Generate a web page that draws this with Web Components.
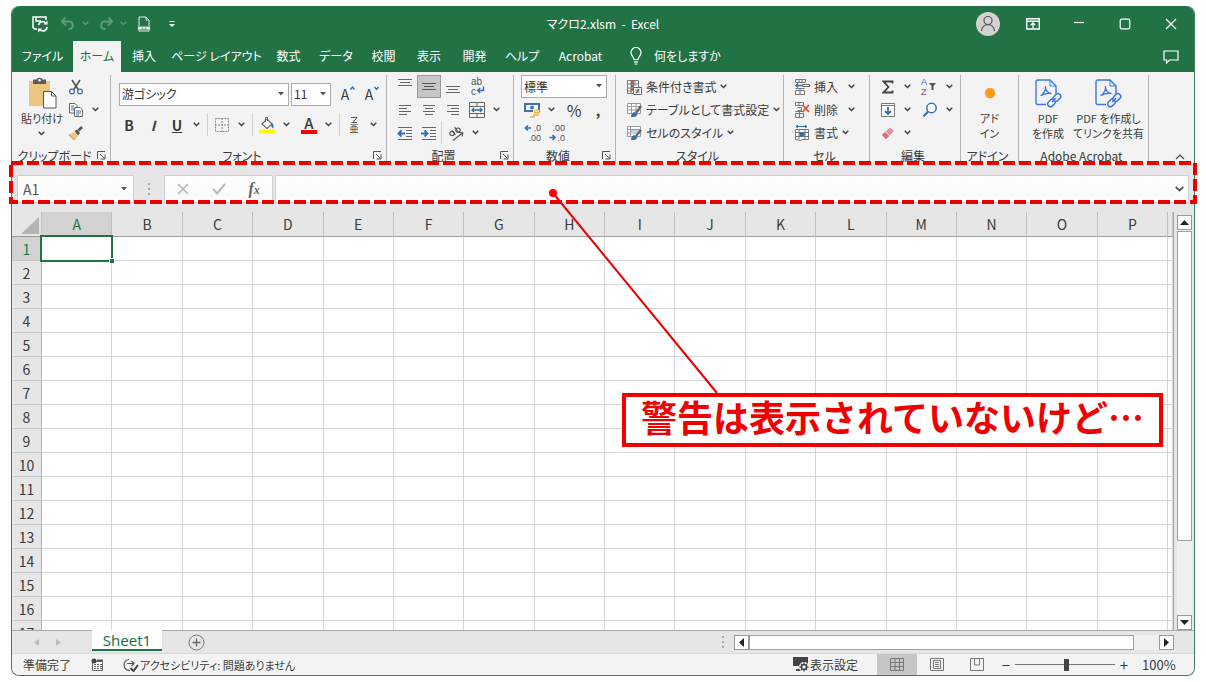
<!DOCTYPE html>
<html lang="ja">
<head>
<meta charset="utf-8">
<title>マクロ2.xlsm - Excel</title>
<style>
  :root {
    --green: #217346;
    --bar: #e6e6e6;
    --panel: #f3f3f3;
    --line: #d6d6d6;
    --ink: #3b3b3b;
    --red: #f00000;
  }
  * { box-sizing: border-box; }
  html, body { margin: 0; }
  body {
    height: 100vh;
    padding: 6px 11px;
    display: flex;
    background: #fff;
    color: var(--ink);
    font: 12px/16px "Noto Sans CJK JP", "Noto Sans", sans-serif;
    font-feature-settings: "palt";
  }
</style>
</head>
<body>
<excel-window></excel-window>

<script>
const ICONS = {
  save: [18, 18, '<path d="M6 14H3.500L2 12.500V2h13v3M5 2v4h5" fill="none" stroke="#fff" stroke-width="1.500"/><path d="M7.500 10a4 4 0 0 1 7-2M16 12a4 4 0 0 1-7 2.500" fill="none" stroke="#fff" stroke-width="1.700"/><path d="M16.500 5.500v4h-4zM7 17.500v-4h4z" fill="#fff"/>'],
  undo: [16, 16, '<path d="M5.500 1.500L2 5.500l4 4M2 5.500h7.500a4 3.800 0 0 1 0 7.500H8.500" fill="none" stroke="#5c9a78" stroke-width="1.900"/>'],
  redo: [16, 16, '<path d="M10.500 1.500L14 5.500l-4 4M14 5.500H6.500a4 3.800 0 0 0 0 7.500H7.500" fill="none" stroke="#5c9a78" stroke-width="1.900"/>'],
  doc: [16, 16, '<path d="M3 10V1h7l3 3v6M10 1v3h3M3 13v2h10v-2" fill="none" stroke="#dfeee5"/><path d="M2 10.500h12v3H2z" fill="#dfeee5"/><path d="M6 12h1M9 12h1" stroke="#217346"/>'],
  custom: [8, 8, '<path d="M1.500 1.500h5" stroke="#fff" fill="none"/><path d="M1 4h6L4 7z" fill="#fff"/>'],
  user: [24, 24, '<circle cx="12" cy="12" r="12" fill="#d2d2d2"/><circle cx="12" cy="8.500" r="4" fill="none" stroke="#555" stroke-width="1.200"/><path d="M5.500 19c.5-8.500 12.500-8.500 13 0" fill="none" stroke="#555" stroke-width="1.200"/>'],
  ribbonopt: [14, 12, '<path d="M.7.700h12.600v10.300H.7zM.7 3.300h12.600" fill="none" stroke="#fff" stroke-width="1.400"/><path d="M7 10V5.500M4.700 7.300L7 5l2.300 2.300" fill="none" stroke="#fff" stroke-width="1.300"/>'],
  min: [12, 12, '<path d="M1 4.500h10" stroke="#fff" stroke-width="1.200"/>'],
  max: [12, 12, '<rect x="1.200" y="1.200" width="9.600" height="9.600" rx="1.500" fill="none" stroke="#fff" stroke-width="1.200"/>'],
  close: [12, 12, '<path d="M1 1l10 10M11 1L1 11" stroke="#fff" stroke-width="1.300"/>'],
  comment: [16, 14, '<path d="M1 1h14v9H6.500l-3 3v-3H1z" fill="none" stroke="#fff" stroke-width="1.200"/>'],
  bulb: [12, 18, '<path d="M4 12.500c0-2.500-3-3.500-3-7a5 5 0 0 1 10 0c0 3.500-3 4.500-3 7zM4 14.800h4M4.500 17h3" fill="none" stroke="#fff" stroke-width="1.200"/>'],
  paste: [30, 32, '<path d="M2 4h21v25H2z" fill="#ecc57f"/><path d="M6 2.500h3.500C10 .3 15 .3 15.500 2.500H19V7H6z" fill="#5b5b5b"/><circle cx="12.500" cy="3.200" r="1.200" fill="#f3f3f3"/><path d="M16.500 14.500h8l4.500 4.500v12H16.500z" fill="#fff" stroke="#555"/><path d="M24.500 14.500V19H29" fill="none" stroke="#555"/>'],
  cut: [16, 16, '<path d="M4 1l6.500 10M12 1L5.500 11" stroke="#555" stroke-width="1.700" fill="none"/><circle cx="4" cy="12.500" r="2.400" fill="none" stroke="#3f73b5" stroke-width="1.300"/><circle cx="12" cy="12.500" r="2.400" fill="none" stroke="#3f73b5" stroke-width="1.300"/>'],
  copy: [16, 16, '<path d="M1.500 1.500H7l2 2V11H1.500z" fill="#fff" stroke="#666"/><path d="M6.500 5.500H12l2.500 2.500v6.500h-8z" fill="#fff" stroke="#666"/><path d="M3 4h3M3 6h3M3 8h3M8 9h5M8 11h5M8 13h3" stroke="#3f73b5"/>'],
  brush: [16, 16, '<path d="M2 9l4-2 4 4-3 4z" fill="#ecc57f"/><path d="M6.500 6L9 4.500 12 8l-2 2.500z" fill="#555"/><path d="M10.500 5.500L14 2" stroke="#555" stroke-width="2.600"/><path d="M1 9.500L6.500 15" stroke="#d9a95a" stroke-width="1.500"/>'],
  borders: [16, 16, '<path d="M1.500 1.500h13v13h-13zM8 1v14M1 8h14" fill="none" stroke="#888" stroke-dasharray="2 1"/>'],
  fill: [18, 18, '<path d="M4 8l5-5 5 5-5 4.500z" fill="#fff" stroke="#666" stroke-width="1.100"/><path d="M7.500 6V1.500h2V5" fill="none" stroke="#666"/><path d="M13.500 6.500q3 2 1.500 6-2-1-2-5z" fill="#2f6fb3"/><path d="M1 13.500h16v4H1z" fill="#ff0"/>'],
  growmark: [24, 23, '<path d="M17.500 6.500L19.500 4l2 2.500" fill="none" stroke="#2f6fb3" stroke-width="1.400"/>'],
  shrinkmark: [24, 23, '<path d="M17.500 4l2 2.500 2-2.500" fill="none" stroke="#2f6fb3" stroke-width="1.400"/>'],
  ruby: [24, 23, '<path d="M9 4.500h6L11 9.500M13 7l-1.500 1M9.500 9.500H15" fill="none" stroke="#555"/>'],
  wrap: [24, 23, '<path d="M18.500 11.500v4H13M15.200 13l-2.500 2.500 2.500 2.500" fill="none" stroke="#2f6fb3" stroke-width="1.400"/>'],
  atop: [16, 16, '<path d="M1 .5h14M3 3.500h10M1 6.500h14" stroke="#666"/>'],
  amid: [16, 16, '<path d="M1 4.500h14M3 7.500h10M1 10.500h14" stroke="#555"/>'],
  abot: [16, 16, '<path d="M1 7.500h14M3 10.500h10M1 13.500h14" stroke="#666"/>'],
  left: [12, 12, '<path d="M0 1.500h12M0 4.500h8M0 7.500h12M0 10.500h8" stroke="#666"/>'],
  center: [12, 12, '<path d="M0 1.500h12M2 4.500h8M0 7.500h12M2 10.500h8" stroke="#666"/>'],
  right: [12, 12, '<path d="M0 1.500h12M4 4.500h8M0 7.500h12M4 10.500h8" stroke="#666"/>'],
  merge: [16, 16, '<path d="M.5.500h15v15H.5zM.5 4.500h15M.5 11.500h15M8 0v4M8 12v4" fill="none" stroke="#666"/><path d="M3 8h10M5 6L3 8l2 2M11 6l2 2-2 2" fill="none" stroke="#2f6fb3" stroke-width="1.300"/>'],
  outdent: [16, 14, '<path d="M1 1.500h14M9 4.500h6M9 7.500h6M9 10.500h6M1 13.500h14" stroke="#666"/><path d="M2 7.500h6M4.500 4.500l-3 3 3 3" stroke="#2f6fb3" stroke-width="1.800" fill="none"/>'],
  indent: [16, 14, '<path d="M1 1.500h14M9 4.500h6M9 7.500h6M9 10.500h6M1 13.500h14" stroke="#666"/><path d="M0 7.500h6M3.500 4.500l3 3-3 3" stroke="#2f6fb3" stroke-width="1.800" fill="none"/>'],
  slant: [16, 16, '<g fill="none" stroke="#555" stroke-width="1.200"><circle cx="4" cy="8.500" r="2.200"/><path d="M4 5.300l3.500 4.500M6.500 2l4 5.500"/><circle cx="10" cy="5.200" r="2.200"/><path d="M5 15.500L14.500 8M11 7.500l3.800.2-.6 3.800"/></g>'],
  money: [17, 16, '<path d="M1 2h14v7H1z" fill="#fff" stroke="#3f73b5" stroke-width="2"/><circle cx="8" cy="5.500" r="2" fill="#3f73b5"/><path d="M9 8h6v7H9z" fill="#f3f3f3"/><path d="M10 8.500h6M10 10.800h6M9 13h6M6 15h5" stroke="#e8b45a" stroke-width="1.500"/>'],
  decup: [24, 23, '<path d="M5.500 7H11M8 4.500L5.500 7 8 9.500" fill="none" stroke="#2f6fb3" stroke-width="1.700"/>'],
  decdn: [24, 23, '<path d="M5.500 16.500H11M8.500 14l2.500 2.500L8.500 19" fill="none" stroke="#2f6fb3" stroke-width="1.700"/>'],
  cond: [16, 16, '<path d="M1.500 1.500h11v13h-11zM5 1v14M9 1v6M1 5h12M1 9h6M1 12h5" fill="#fff" stroke="#777"/><path d="M5 2h3v3H5zM5 9h2v3H5z" fill="#d9532c"/><path d="M5 5.500h3v3H5z" fill="#3f73b5"/><path d="M7.500 8.500h8v7h-8z" fill="#fff" stroke="#666"/><path d="M9.500 11h4M9.500 13h4M13 10l-3 4.500" stroke="#555"/>'],
  table: [16, 16, '<path d="M1.500 1.500h13v10h-13zM1 4.500h14M1 8h14M5.500 1v11M10 1v10" fill="#fff" stroke="#999"/><path d="M5 15q0-4 3.500-5l3 2.500Q10 15.500 5 15z" fill="#2f6fb3"/><path d="M10 11L15 4" stroke="#666" stroke-width="2.400"/>'],
  cellstyle: [16, 16, '<path d="M1.500 1.500h13v10h-13zM1 4.500h14M4.500 1v10M1 8h14" fill="#fff" stroke="#999"/><path d="M5 5h8v4H5z" fill="#bcd3ec"/><path d="M5 15q0-4 3.500-5l3 2.500Q10 15.500 5 15z" fill="#2f6fb3"/><path d="M10 11L15 5" stroke="#666" stroke-width="2.400"/>'],
  insert: [16, 16, '<path d="M1.500.500h10v3h-10zM5 .5v3M8 .5v3M1.500 11.500h9v4h-9zM6 9.500v6M1.500 9.500h9" fill="none" stroke="#777"/><path d="M8.500 5.500h7v2h-7z" fill="#fff" stroke="#666"/><path d="M2 6.500h6M4 4.500L2 6.500l2 2" stroke="#2f6fb3" stroke-width="1.400" fill="none"/>'],
  del: [16, 16, '<path d="M1.500.500h8v3h-8zM5 .5v3M3.500 5.500h4v3h-4M1.500 11.500h8v4h-8zM5.500 9.500v6M1.500 9.500h8" fill="none" stroke="#777"/><path d="M8.500 3L15 10M15 3L8.500 10" stroke="#df4d26" stroke-width="1.800"/>'],
  format: [16, 16, '<path d="M2 1.500h11M4 0L2 1.500 4 3M11 0l2 1.500L11 3" fill="none" stroke="#2f6fb3"/><path d="M1.500 4.500h13v10h-6l-2 1-5-1zM5 4.500v10M11 4.500v10M1.500 7.500h13M1.500 11.500h13" fill="#fff" stroke="#777"/><path d="M5.500 7.500h5v4h-5z" fill="#2f6fb3"/>'],
  sum: [12, 14, '<path d="M10.500 3.500V1.500H1.500L6.500 7l-5 5.500h9v-2" fill="none" stroke="#444" stroke-width="1.800"/>'],
  sort: [24, 23, '<path d="M11 8h7l-2.500 3v4h-2v-4z" fill="#555"/>'],
  down: [14, 14, '<path d="M.5.500h13v13H.5zM.5 2.500h13" fill="#fff" stroke="#777"/><path d="M7 4v7M4 8l3 3 3-3" fill="none" stroke="#2f6fb3" stroke-width="1.800"/>'],
  find: [16, 16, '<circle cx="9.500" cy="6" r="4.700" fill="#fff" stroke="#2f6fb3" stroke-width="1.500"/><path d="M6 9.500L1.500 14.500" stroke="#2f6fb3" stroke-width="2"/>'],
  eraser: [14, 14, '<path d="M1 9l8-7.500 4 3.500-8 8z" fill="#e88b9c"/><path d="M1 9l3.500-3 4 3.800L5 13z" fill="#e0697f"/><path d="M4.500 5.700l4 4" stroke="#fff"/>'],
  dot: [12, 12, '<circle cx="6" cy="6" r="5.200" fill="#ff9a1a"/>'],
  pdf: [28, 30, '<path d="M12 26.500H4q-2 0-2-2V4q0-2 2-2h12l6 6v8" fill="none" stroke="#3b78e7" stroke-width="1.400"/><path d="M16 2v6h6" fill="none" stroke="#3b78e7"/><path d="M6.500 17.500c3-1 5.500-5.500 5-9.500M11.500 9c0 4 3 6.500 6 6.500-4-.5-7 0-10.500 2" fill="none" stroke="#3b78e7" stroke-width="1.300"/><g fill="#f3f3f3" stroke="#3b78e7" stroke-width="1.500" transform="rotate(-45 20 22)"><rect x="12" y="19.500" width="8.500" height="5.500" rx="2.700"/><rect x="19.500" y="19.500" width="8.500" height="5.500" rx="2.700"/></g><path d="M18 24l4-4" stroke="#3b78e7" stroke-width="1.400"/>'],
  launcher: [9, 9, '<path d="M.5 8V.5H8M3 3l4.500 4.500M8 3.500V8H3.500" fill="none" stroke="#555"/>'],
  up: [10, 6, '<path d="M1 5l4-4 4 4" fill="none" stroke="#444" stroke-width="1.200"/>'],
  caret: [7, 5, '<path d="M.7.700l2.800 2.800L6.300.7" fill="none" stroke="currentColor" stroke-width="1.300"/>'],
  tri: [6, 4, '<path d="M0 0h6L3 3.500z" fill="#555"/>'],
  dots: [4, 14, '<path d="M1 1h2v2H1zM1 6h2v2H1zM1 11h2v2H1z" fill="#a8a8a8"/>'],
  cancel: [12, 12, '<path d="M1 1l10 10M11 1L1 11" stroke="#b8b8b8" stroke-width="1.700"/>'],
  check: [14, 12, '<path d="M1 6l4 4.500L13 1" fill="none" stroke="#b8b8b8" stroke-width="2"/>'],
  expand: [9, 6, '<path d="M.7 1l3.800 3.500L8.300 1" fill="none" stroke="#555" stroke-width="1.700"/>'],
  corner: [18, 17, '<path d="M18 0v17H0z" fill="#b4b4b4"/>'],
  sup: [9, 5, '<path d="M0 5l4.500-5L9 5z" fill="#222"/>'],
  sdn: [9, 5, '<path d="M0 0l4.500 5L9 0z" fill="#222"/>'],
  sl: [5, 9, '<path d="M5 0v9L0 4.500z" fill="#222"/>'],
  sr: [5, 9, '<path d="M0 0v9l5-4.500z" fill="#222"/>'],
  nl: [5, 7, '<path d="M5 0v7L0 3.500z" fill="#bdbdbd"/>'],
  nr: [5, 7, '<path d="M0 0v7l5-3.500z" fill="#bdbdbd"/>'],
  plus: [17, 17, '<circle cx="8.500" cy="8.500" r="7.500" fill="none" stroke="#777"/><path d="M4.500 8.500h8M8.500 4.500v8" stroke="#666" stroke-width="1.300"/>'],
  macro: [13, 13, '<path d="M1.500 3.500h10v9h-10z" fill="#fff" stroke="#666"/><path d="M6 1.500h6v2H6z" fill="#555"/><circle cx="3" cy="3" r="2.500" fill="#444"/><path d="M3 6.500h8M3 8.500h8M3 10.500h8" stroke="#666" stroke-dasharray="2 1"/>'],
  access: [16, 14, '<path d="M6 1.500a5.500 5.500 0 0 0 1 11M4 5.500h7M8.500 3l2.500 2.500L8.500 8" fill="none" stroke="#555" stroke-width="1.200"/><path d="M7.500 10l3 3 4.500-6" fill="none" stroke="#444" stroke-width="2"/>'],
  display: [16, 15, '<path d="M0 0h15v9H0zM3 12h5v2H3z" fill="#444"/><circle cx="11" cy="10" r="5" fill="#f3f3f3"/><path d="M11 5.500v9M6.500 10h9M8 7l6 6M14 7l-6 6" stroke="#444" stroke-width="1.300"/><circle cx="11" cy="10" r="2.500" fill="#f3f3f3" stroke="#444" stroke-width="1.500"/>'],
  normal: [14, 13, '<path d="M.5.500h13v12H.5zM.5 4.500h13M.5 8.500h13M5 .5v12M9.500.500v12" fill="none" stroke="#777"/>'],
  pagelay: [14, 13, '<path d="M.5.500h13v12H.5zM3.500 2.500h7v8h-7zM5 4.500h4M5 6.500h4M5 8.500h4" fill="none" stroke="#777"/>'],
  pagebrk: [14, 13, '<path d="M.5.500h13v12H.5zM4.500.500v6.500h5V.5" fill="none" stroke="#777"/>']
};
const icon = n => { const [w, h, s] = ICONS[n]; return `<svg width="${w}" height="${h}" viewBox="0 0 ${w} ${h}" aria-hidden="true">${s}</svg>`; };
const BASE = `<style>*{box-sizing:border-box}svg{display:block;flex:none}
button{font:inherit;color:inherit;background:none;border:0;padding:0;margin:0;display:flex;align-items:center;justify-content:center}</style>`;

function define(name, render) {
  customElements.define(name, class extends HTMLElement {
    connectedCallback() {
      if (this.shadowRoot) return;
      this.attachShadow({ mode: 'open' }).innerHTML = BASE + render(this);
    }
  });
}

/* Icon button; the slot carries glyphs laid over the icon, or a caption beside it. */
define('tool-button', el => {
  const i = el.getAttribute('icon'), cap = el.hasAttribute('caption');
  return `<style>
    :host{display:flex;height:23px;flex:none}
    :host([sep]){border-left:1px solid #d0d0d0;padding-left:2px}
    :host([on]) button{background:#c6c6c6;outline:1px solid #9a9a9a;outline-offset:-1px}
    .i{width:24px;height:100%;display:grid;place-items:center}
    .i>*,::slotted(*){grid-area:1/1}
    .t{white-space:nowrap}
    .c{width:var(--caret,18px);padding-right:var(--caretpad,4px);display:flex;justify-content:center}
    button{height:100%}
  </style><button type="button" aria-label="${el.getAttribute('name') || el.textContent.trim()}">
    <span class="i">${i ? icon(i) : ''}${cap ? '' : '<slot></slot>'}</span>${cap ? '<span class="t"><slot></slot></span>' : ''}${el.hasAttribute('caret') ? `<span class="c">${icon('caret')}</span>` : ''}
  </button>`;
});

/* Tall ribbon button: picture above a caption. */
define('big-button', el => `<style>
    :host{display:flex;justify-content:center;flex:none}
    button{flex-direction:column;justify-content:flex-start;line-height:15px;font-size:11px;white-space:nowrap}
    .p{height:36px;display:flex;align-items:center}
    .c{height:14px;display:flex;align-items:center}
  </style><button type="button"><span class="p">${icon(el.getAttribute('icon'))}</span><slot></slot>
  ${el.hasAttribute('caret') ? `<span class="c">${icon('caret')}</span>` : ''}</button>`);

define('drop-list', el => `<style>
    :host{display:flex;position:relative;height:23px;flex:none}
    select{appearance:none;flex:1;min-width:0;border:1px solid #ababab;border-radius:0;background:#fff;color:#333;font:12px/20px "Noto Sans CJK JP",sans-serif;font-feature-settings:inherit;padding:0 2px;margin:0}
    svg{position:absolute;right:5px;top:9px;pointer-events:none}
  </style><select aria-label="${el.getAttribute('name')}"><option>${el.getAttribute('value')}</option></select>${icon('tri')}`);

define('ribbon-group', el => `<style>
    :host{display:flex;flex-direction:column;flex:none;border-right:1px solid #b4b4b4}
    .body{height:73px;display:flex;flex-direction:column}
    footer{display:flex;align-items:center;height:15px;padding-right:4px}
    footer span{flex:1;text-align:center;white-space:nowrap;line-height:15px}
  </style><div class="body"><slot></slot></div>
  <footer><span>${el.getAttribute('label')}</span>${el.hasAttribute('launcher') ? `<button type="button" aria-label="${el.getAttribute('label')}の設定">${icon('launcher')}</button>` : ''}</footer>`);

define('title-bar', () => `<style>
    :host{display:grid;grid-template-columns:1fr auto 1fr;align-items:center;height:35px;background:var(--green);color:#fff;flex:none;border-radius:8px 8px 0 0}
    .q{display:flex;gap:4px;padding-left:16px;--caret:10px;--caretpad:0px}
    .dim{color:#5c9a78}
    .w{display:flex;justify-content:flex-end;align-items:center}
    .w button{width:46px;height:32px}.w .u{width:24px;margin-right:10px}
  </style>
  <div class="q"><tool-button icon="save" name="上書き保存"></tool-button><tool-button class="dim" icon="undo" name="元に戻す" caret></tool-button><tool-button class="dim" icon="redo" name="やり直し" caret></tool-button><tool-button icon="doc" name="印刷プレビュー"></tool-button><tool-button icon="custom" name="カスタマイズ"></tool-button></div>
  <span>マクロ2.xlsm&nbsp; - &nbsp;Excel</span>
  <div class="w"><button class="u" aria-label="アカウント">${icon('user')}</button><button aria-label="リボンの表示オプション">${icon('ribbonopt')}</button><button aria-label="最小化">${icon('min')}</button><button aria-label="最大化">${icon('max')}</button><button aria-label="閉じる">${icon('close')}</button></div>`);

define('ribbon-tabs', () => `<style>
    :host{display:flex;height:31px;background:var(--green);color:#fff;flex:none}
    nav{display:grid;grid-template-columns:61px 48px 46px 99px 45px 50px 45px 46px 45px 50px 67px}
    nav button{white-space:nowrap;padding-bottom:2px}
    nav .on{background:var(--panel);color:var(--green)}
    .tell{margin-left:16px;gap:12px;padding-bottom:2px}
    .cm{margin-left:auto;width:46px}
  </style><nav>${['ファイル', 'ホーム', '挿入', 'ページ レイアウト', '数式', 'データ', '校閲', '表示', '開発', 'ヘルプ', 'Acrobat'].map((t, i) => `<button type="button"${i === 1 ? ' class="on"' : ''}>${t}</button>`).join('')}</nav>
  <button type="button" class="tell">${icon('bulb')}何をしますか</button><button type="button" class="cm" aria-label="コメント">${icon('comment')}</button>`);

define('excel-ribbon', () => `<style>
    :host{display:flex;height:92px;padding-top:3px;background:var(--panel);flex:none}
    .r{display:flex;height:23px;align-items:center}
    .pad{padding-left:6px}
    .clip{display:flex;padding-left:8px}
    .clip big-button{width:44px}
    .clip>div{--caret:14px;--caretpad:0px}
    .first{height:38px;padding-left:8px}
    .first drop-list{margin-right:2px}
    b,i,u{font-size:14px}
    .A{font-size:14px;line-height:15px}
    .Ac{display:block;border-bottom:4px solid #f00;line-height:14px;width:16px;text-align:center;font-size:15px;font-weight:500}
    .ruby{font-size:9px;line-height:10px;padding-top:9px}
    .ab,.num,.sz{font-family:"Liberation Sans",sans-serif;width:24px;color:#555}
    .ab{font-size:10px;line-height:10px;padding-left:6px;text-align:left}
    .num{font-size:9px;line-height:10px;text-align:right;padding-right:3px}
    .sz{font-size:9px;line-height:10px;padding-left:3px;text-align:left;color:#3f73b5}
    .sz em{font-style:normal;color:#9a3f9a}
    .pc{font-size:16px}
    .styles{padding-left:6px}
    .tail{flex:1;display:flex;justify-content:flex-end;align-items:flex-end;padding:0 9px 4px 0}
    .acro{display:flex;padding-left:8px;gap:4px}
    .acro big-button:first-child{width:42px}
  </style>
  <ribbon-group label="クリップボード" launcher style="width:99px"><div class="clip">
    <big-button icon="paste" caret><span>貼り付け</span></big-button>
    <div><tool-button icon="cut" name="切り取り"></tool-button><tool-button icon="copy" name="コピー" caret></tool-button><tool-button icon="brush" name="書式のコピー"></tool-button></div></div>
  </ribbon-group>
  <ribbon-group label="フォント" launcher style="width:276px">
    <div class="r first"><drop-list name="フォント名" value="游ゴシック" style="width:170px"></drop-list><drop-list name="サイズ" value="11" style="width:40px"></drop-list><tool-button icon="growmark" name="フォントサイズの拡大"><span class="A">A</span></tool-button><tool-button icon="shrinkmark" name="フォントサイズの縮小"><span class="A">A</span></tool-button></div>
    <div class="r pad"><tool-button><b>B</b></tool-button><tool-button><i><b>I</b></i></tool-button><tool-button caret><u><b>U</b></u></tool-button><tool-button sep icon="borders" name="罫線" caret></tool-button><tool-button sep icon="fill" name="塗りつぶしの色" caret></tool-button><tool-button name="フォントの色" caret><span class="Ac">A</span></tool-button><tool-button sep icon="ruby" name="ふりがな" caret><span class="ruby">亜</span></tool-button></div>
  </ribbon-group>
  <ribbon-group label="配置" launcher style="width:127px">
    <div class="r pad"><tool-button icon="atop" name="上揃え"></tool-button><tool-button on icon="amid" name="上下中央揃え"></tool-button><tool-button icon="abot" name="下揃え"></tool-button><tool-button icon="wrap" name="折り返し"><span class="ab">ab<br>c</span></tool-button></div>
    <div class="r pad"><tool-button icon="left" name="左揃え"></tool-button><tool-button icon="center" name="中央揃え"></tool-button><tool-button icon="right" name="右揃え"></tool-button><tool-button icon="merge" name="セルを結合" caret></tool-button></div>
    <div class="r pad"><tool-button icon="outdent" name="インデント減"></tool-button><tool-button icon="indent" name="インデント増"></tool-button><tool-button sep icon="slant" name="方向" caret></tool-button></div>
  </ribbon-group>
  <ribbon-group label="数値" launcher style="width:102px">
    <div class="r" style="padding-left:7px"><drop-list name="表示形式" value="標準" style="width:86px"></drop-list></div>
    <div class="r pad"><tool-button icon="money" name="通貨" caret></tool-button><tool-button name="パーセント"><span class="pc">%</span></tool-button><tool-button name="桁区切り"><b>,</b></tool-button></div>
    <div class="r pad"><tool-button icon="decup" name="小数点以下を増やす"><span class="num">.0<br>.00</span></tool-button><tool-button icon="decdn" name="小数点以下を減らす"><span class="num">.00<br>.0</span></tool-button></div>
  </ribbon-group>
  <ribbon-group label="スタイル" style="width:168px">
    <div class="styles"><tool-button caption caret icon="cond">条件付き書式</tool-button><tool-button caption caret icon="table">テーブルとして書式設定</tool-button><tool-button caption caret icon="cellstyle">セルのスタイル</tool-button></div>
  </ribbon-group>
  <ribbon-group label="セル" style="width:86px">
    <div class="styles"><tool-button caption caret icon="insert" style="--caret:30px">挿入</tool-button><tool-button caption caret icon="del" style="--caret:30px">削除</tool-button><tool-button caption caret icon="format">書式</tool-button></div>
  </ribbon-group>
  <ribbon-group label="編集" style="width:91px">
    <div class="r pad"><tool-button icon="sum" name="合計" caret></tool-button><tool-button icon="sort" name="並べ替え" caret><span class="sz">A<br><em>Z</em></span></tool-button></div>
    <div class="r pad"><tool-button icon="down" name="フィル" caret></tool-button><tool-button icon="find" name="検索" caret></tool-button></div>
    <div class="r pad"><tool-button icon="eraser" name="クリア" caret></tool-button></div>
  </ribbon-group>
  <ribbon-group label="アドイン" style="width:58px"><big-button icon="dot"><span>アド<br>イン</span></big-button></ribbon-group>
  <ribbon-group label="Adobe Acrobat" style="width:130px"><div class="acro"><big-button icon="pdf"><span>PDF<br>を作成</span></big-button><big-button icon="pdf"><span>PDF を作成し<br>てリンクを共有</span></big-button></div></ribbon-group>
  <div class="tail"><button type="button" aria-label="リボンを折りたたむ">${icon('up')}</button></div>`);

define('formula-bar', () => `<style>
    :host{display:flex;position:relative;height:48px;padding:11px 5px 9px;background:var(--bar);flex:none}
    .box{display:flex;align-items:center;background:#fdfdfd;border:1px solid #d0d0d0}
    input{border:0;background:none;outline:0;min-width:0;flex:1;padding:0 5px;color:#555;font:14px/20px "Noto Sans CJK JP",sans-serif}
    .name{width:117px}.name button{width:18px}
    .dots{width:30px;display:flex;align-items:center;justify-content:center}
    .fx{width:109px;margin-right:2px}.fx button{flex:1}
    .fx i{font:italic bold 16px/20px "Liberation Serif",serif;color:#666}
    .fx small{font-size:12px}
    .text{flex:1}.text button{width:17px}
    .mark{position:absolute;left:-1px;top:-1px;width:calc(100% + 2px);height:39px;overflow:visible;pointer-events:none}
  </style>
  <div class="box name"><input aria-label="名前ボックス" value="A1"><button type="button" aria-label="名前の一覧">${icon('tri')}</button></div>
  <div class="dots">${icon('dots')}</div>
  <div class="box fx"><button type="button" aria-label="キャンセル">${icon('cancel')}</button><button type="button" aria-label="入力">${icon('check')}</button><button type="button" aria-label="関数の挿入"><i>f<small>x</small></i></button></div>
  <div class="box text"><input aria-label="数式バー"><button type="button" aria-label="数式バーの展開">${icon('expand')}</button></div>
  <svg class="mark" aria-hidden="true"><rect width="100%" height="39" fill="none" stroke="#ea0000" stroke-width="4" stroke-dasharray="12 4"/></svg>`);

define('sheet-grid', () => {
  const cols = [...'ABCDEFGHIJKLMNOP'];
  const rows = Array.from({ length: 17 }, (_, r) => `<tr><th scope="row"${r ? '' : ' class="on"'}>${r + 1}</th>${cols.map((_, c) => !r && !c ? '<td class="cur"><span></span></td>' : '<td></td>').join('')}<td></td></tr>`).join('');
  return `<style>
    :host{display:flex;flex:1;min-height:0;background:var(--bar);overflow:hidden}
    .v{flex:1;min-width:0;overflow:hidden;border-right:1px solid #a8a8a8}
    table{width:100%;table-layout:fixed;border-collapse:separate;border-spacing:0;background:#fff}
    th{height:24px;padding:0;font-weight:400;font-size:14px;line-height:20px;background:var(--bar);border-right:1px solid #b0b0b0;border-bottom:1px solid #c8c8c8}
    thead th{height:25px;border-right-color:#c0c0c0;border-bottom-color:#9c9c9c}
    td{height:24px;padding:0;border-right:1px solid var(--line);border-bottom:1px solid var(--line)}
    .on{background:#d2d2d2;color:var(--green)}
    .cor svg{margin:3px 0 0 9px}
    .cur{position:relative}
    .cur span{position:absolute;inset:-2px;border:2px solid var(--green)}
    .cur span::after{content:"";position:absolute;right:-3px;bottom:-3px;width:4px;height:4px;background:var(--green);border:solid #fff;border-width:1px 0 0 1px;box-sizing:content-box}
    .s{width:20px;display:flex;flex-direction:column;align-items:center;padding:3px 0 0}
    .s button{width:15px;height:15px;background:#fff;border:1px solid #999;flex:none}
    .track{flex:1;display:flex;flex-direction:column;padding:1px 0;background:#f0f0f0}
    .thumb{width:15px;height:81%;background:#fff;border:1px solid #a0a0a0}
  </style><div class="v"><table><colgroup><col style="width:30px">${cols.map(() => '<col>').join('')}<col style="width:5px"></colgroup>
  <thead><tr><th class="cor">${icon('corner')}</th>${cols.map((c, i) => `<th scope="col"${i ? '' : ' class="on"'}>${c}</th>`).join('')}<th></th></tr></thead><tbody>${rows}</tbody></table></div>
  <div class="s"><button type="button" aria-label="上へ">${icon('sup')}</button><div class="track"><div class="thumb"></div></div><button type="button" aria-label="下へ">${icon('sdn')}</button></div>`;
});

define('sheet-tabs', () => `<style>
    :host{display:flex;align-items:center;height:23px;background:var(--bar);border-top:1px solid #a8a8a8;flex:none}
    .n{width:80px;display:flex;padding-left:22px;gap:17px}
    .tab{width:70px;height:21px;align-self:flex-start;background:#fff;color:var(--green);border-bottom:2px solid var(--green);font-size:15px;line-height:18px;margin-top:-1px;font-family:"Noto Sans","Noto Sans CJK JP",sans-serif}
    .add{margin-left:26px}
    .h{margin-left:auto;display:flex;align-items:center;width:40%;padding-right:20px}
    .h button{width:15px;height:15px;background:#fff;border:1px solid #999;flex:none}
    .d{width:13px;flex:none}
    .track{flex:1;background:#f0f0f0}
    .thumb{height:15px;width:94%;background:#fff;border:1px solid #a0a0a0}
  </style><div class="n"><button type="button" aria-label="前へ">${icon('nl')}</button><button type="button" aria-label="次へ">${icon('nr')}</button></div>
  <button type="button" class="tab">Sheet1</button><button type="button" class="add" aria-label="新しいシート">${icon('plus')}</button>
  <div class="h"><span class="d">${icon('dots')}</span><button type="button" aria-label="左へ">${icon('sl')}</button><div class="track"><div class="thumb"></div></div><button type="button" aria-label="右へ">${icon('sr')}</button></div>`);

define('status-bar', () => `<style>
    :host{display:flex;align-items:center;height:22px;background:var(--panel);border-top:1px solid #dadada;padding-left:11px;flex:none;border-radius:0 0 8px 8px}
    .m{margin:0 19px 0 20px}
    .a{font-size:11px;gap:1px}
    .r{margin-left:auto;display:flex;align-items:center;height:100%}
    .ds{gap:1px;margin-right:19px}
    .vw{width:40px;height:100%}.vw.on{background:#c6c6c6}
    .z{width:18px;font-size:15px}
    input{appearance:none;width:100px;height:12px;margin:0;background:linear-gradient(#777,#777) center/100% 1px no-repeat}
    input::-webkit-slider-thumb{appearance:none;width:5px;height:12px;background:#444}
    .p{width:61px;padding-left:9px;font-size:13px}
  </style><span>準備完了</span><span class="m">${icon('macro')}</span><button type="button" class="a">${icon('access')}アクセシビリティ: 問題ありません</button>
  <div class="r"><button type="button" class="ds">${icon('display')}表示設定</button><button type="button" class="vw on" aria-label="標準">${icon('normal')}</button><button type="button" class="vw" aria-label="ページ レイアウト">${icon('pagelay')}</button><button type="button" class="vw" aria-label="改ページ プレビュー">${icon('pagebrk')}</button>
  <button type="button" class="z" aria-label="縮小">−</button><input type="range" aria-label="ズーム" min="10" max="190" value="102"><button type="button" class="z" aria-label="拡大">+</button><span class="p">100%</span></div>`);

/* Annotation floating on the sheet, with its leader line to the formula bar. */
define('call-out', () => `<style>
    :host{position:absolute;left:611px;top:387px;width:541px;height:54px;pointer-events:none}
    p{margin:0;width:100%;height:100%;border:4px solid var(--red);background:#fff;color:var(--red);font-weight:700;font-size:36px;line-height:38px;text-align:center;white-space:nowrap;font-feature-settings:normal}
    svg{position:absolute;left:-69px;top:-200px;overflow:visible}
  </style><p><slot></slot></p><svg width="164" height="200" aria-hidden="true"><path d="M0 0L164 200" stroke="#ea0000" stroke-width="2"/><circle r="4" fill="#f00"/></svg>`);

define('excel-window', () => `<style>
    :host{display:flex;flex-direction:column;position:relative;flex:1;min-width:0}
    main{display:flex;flex-direction:column;flex:1;min-height:0;border:1px solid #3f7d5c;border-top:0;border-radius:8px}
  </style><main><title-bar></title-bar><ribbon-tabs></ribbon-tabs><excel-ribbon></excel-ribbon><formula-bar></formula-bar><sheet-grid></sheet-grid><sheet-tabs></sheet-tabs><status-bar></status-bar></main>
  <call-out>警告は表示されていないけど…</call-out>`);
</script>
</body>
</html>
